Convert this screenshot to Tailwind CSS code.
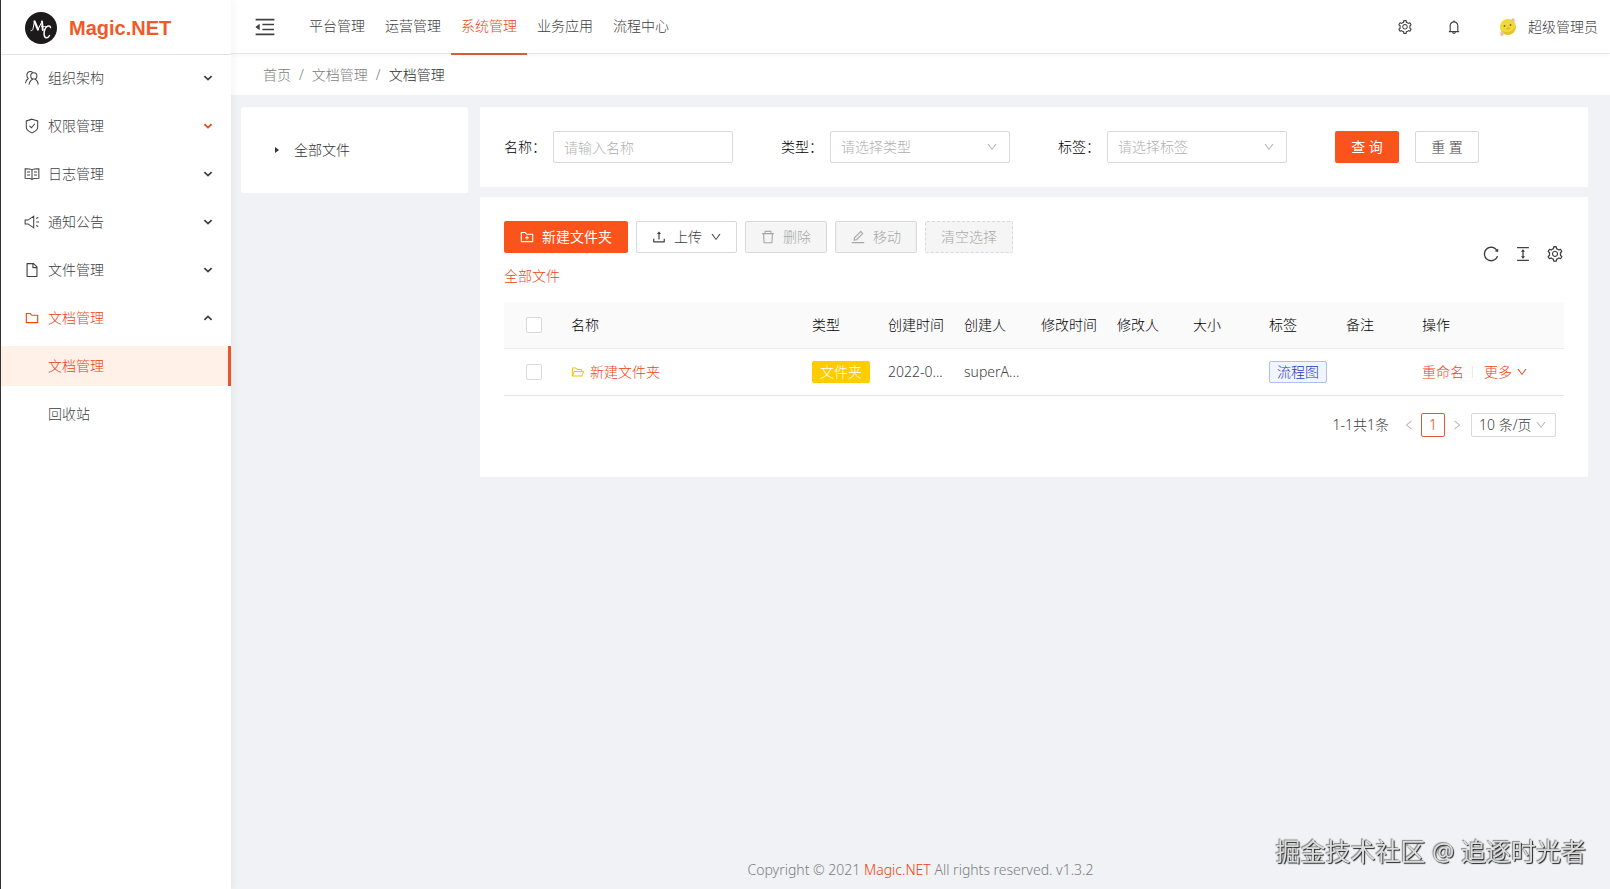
<!DOCTYPE html>
<html lang="zh-CN">

<head>
  <meta charset="UTF-8" />
  <meta name="viewport" content="width=device-width, initial-scale=1.0" />
  <title>文档管理 - Magic.NET</title>
  <script src="https://cdn.jsdelivr.net/npm/@tailwindcss/browser@4"></script>
</head>

<body class="flex min-h-screen bg-[#f0f2f5] font-['Noto_Sans','Noto_Sans_CJK_SC',sans-serif] text-sm font-light text-[#404040]">

  <!-- icons -->
  <svg class="hidden">
    <symbol id="down" viewBox="0 0 1024 1024"><path d="M884 256h-75c-5.1 0-9.9 2.5-12.9 6.6L512 654.2 227.9 262.6c-3-4.1-7.8-6.6-12.9-6.6h-75c-6.5 0-10.3 7.4-6.5 12.7l352.6 486.1c12.8 17.6 39 17.6 51.7 0l352.6-486.1c3.9-5.3.1-12.7-6.4-12.7z" /></symbol>
    <symbol id="left" viewBox="0 0 1024 1024"><path d="M724 218.3V141c0-6.7-7.7-10.4-12.9-6.3L260.3 486.8a31.86 31.86 0 000 50.3l450.8 352.1c5.3 4.1 12.9.4 12.9-6.3v-77.3c0-4.9-2.3-9.6-6.1-12.6l-360-281 360-281.1c3.8-3 6.1-7.7 6.1-12.6z" /></symbol>
    <symbol id="right" viewBox="0 0 1024 1024"><path d="M765.7 486.8L314.9 134.7A7.97 7.97 0 00302 141v77.3c0 4.9 2.3 9.6 6.1 12.6l360 281.1-360 281.1c-3.9 3-6.1 7.7-6.1 12.6V883c0 6.7 7.7 10.4 12.9 6.3l450.8-352.1a31.96 31.96 0 000-50.4z" /></symbol>
    <symbol id="folder" viewBox="0 0 1024 1024"><path d="M880 298.4H521L403.7 186.2a8.15 8.15 0 00-5.5-2.2H144c-17.7 0-32 14.3-32 32v592c0 17.7 14.3 32 32 32h736c17.7 0 32-14.3 32-32V330.4c0-17.7-14.3-32-32-32zM840 768H184V256h188.5l119.6 114.4H840V768z" /></symbol>
    <symbol id="folder-add" viewBox="0 0 1024 1024"><path d="M484 443.1V528h-84.5c-4.1 0-7.5 3.1-7.5 7v42c0 3.8 3.4 7 7.5 7H484v84.9c0 3.9 3.2 7.1 7 7.1h42c3.9 0 7-3.2 7-7.1V584h84.5c4.1 0 7.5-3.2 7.5-7v-42c0-3.9-3.4-7-7.5-7H540v-84.9c0-3.9-3.1-7.1-7-7.1h-42c-3.8 0-7 3.2-7 7.1zM880 298.4H521L403.7 186.2a8.15 8.15 0 00-5.5-2.2H144c-17.7 0-32 14.3-32 32v592c0 17.7 14.3 32 32 32h736c17.7 0 32-14.3 32-32V330.4c0-17.7-14.3-32-32-32zM840 768H184V256h188.5l119.6 114.4H840V768z" /></symbol>
    <symbol id="folder-open" viewBox="0 0 1024 1024"><path d="M928 444H820V330.4c0-17.7-14.3-32-32-32H473L355.7 186.2a8.15 8.15 0 00-5.5-2.2H96c-17.7 0-32 14.3-32 32v592c0 17.7 14.3 32 32 32h698c13 0 24.8-7.9 29.7-20l134-332c1.5-3.8 2.3-7.9 2.3-12 0-17.7-14.3-32-32-32zM136 256h188.5l119.6 114.4H748V444H238c-13 0-24.8 7.9-29.7 20L136 643.2V256zm635.3 512H159l103.3-256h612.4L771.3 768z" /></symbol>
    <symbol id="file" viewBox="0 0 1024 1024"><path d="M854.6 288.6L639.4 73.4c-6-6-14.1-9.4-22.6-9.4H192c-17.7 0-32 14.3-32 32v832c0 17.7 14.3 32 32 32h640c17.7 0 32-14.3 32-32V311.3c0-8.5-3.4-16.7-9.4-22.7zM790.2 326H602V137.8L790.2 326zm1.8 562H232V136h302v216a42 42 0 0042 42h216v494z" /></symbol>
    <symbol id="delete" viewBox="0 0 1024 1024"><path d="M360 184h-8c4.4 0 8-3.6 8-8v8h304v-8c0 4.4 3.6 8 8 8h-8v72h72v-80c0-35.3-28.7-64-64-64H352c-35.3 0-64 28.7-64 64v80h72v-72zm504 72H160c-17.7 0-32 14.3-32 32v32c0 4.4 3.6 8 8 8h60.4l24.7 523c1.6 34.1 29.8 61 63.9 61h454c34.2 0 62.3-26.8 63.9-61l24.7-523H888c4.4 0 8-3.6 8-8v-32c0-17.7-14.3-32-32-32zM731.3 840H292.7l-24.2-512h487l-24.2 512z" /></symbol>
    <symbol id="edit" viewBox="0 0 1024 1024"><path d="M257.7 752c2 0 4-.2 6-.5L431.9 722c2-.4 3.9-1.3 5.3-2.8l423.9-423.9a9.96 9.96 0 000-14.1L694.9 114.9c-1.9-1.9-4.4-2.9-7.1-2.9s-5.2 1-7.1 2.9L256.8 538.8c-1.5 1.5-2.4 3.3-2.8 5.3l-29.5 168.2a33.5 33.5 0 009.4 29.8c6.6 6.4 14.9 9.9 23.8 9.9zm67.4-174.4L687.8 215l73.3 73.3-362.7 362.6-88.9 15.7 15.6-89zM880 836H144c-17.7 0-32 14.3-32 32v36c0 4.4 3.6 8 8 8h784c4.4 0 8-3.6 8-8v-36c0-17.7-14.3-32-32-32z" /></symbol>
    <symbol id="upload" viewBox="0 0 1024 1024"><path d="M400 317.7h73.9V656c0 4.4 3.6 8 8 8h60c4.4 0 8-3.6 8-8V317.7H624c6.7 0 10.4-7.7 6.3-12.9L518.3 163a8 8 0 00-12.6 0l-112 141.7c-4.1 5.3-.4 13 6.3 13zM878 626h-60c-4.4 0-8 3.6-8 8v154H214V634c0-4.4-3.6-8-8-8h-60c-4.4 0-8 3.6-8 8v198c0 17.7 14.3 32 32 32h684c17.7 0 32-14.3 32-32V634c0-4.4-3.6-8-8-8z" /></symbol>
    <symbol id="reload" viewBox="0 0 1024 1024"><path d="M909.1 209.3l-56.4 44.1C775.8 155.1 656.2 92 521.9 92 290 92 102.3 279.5 102 511.5 101.7 743.7 289.8 932 521.9 932c181.3 0 335.8-115 394.6-276.1 1.5-4.2-.7-8.9-4.9-10.3l-56.7-19.5a8 8 0 00-10.1 4.8c-1.8 5-3.8 10-5.9 14.9-17.3 41-42.1 77.8-73.7 109.4A344.77 344.77 0 01655.9 829c-42.3 17.9-87.4 27-133.8 27-46.5 0-91.5-9.1-133.8-27A341.5 341.5 0 01279 755.2a342.16 342.16 0 01-73.7-109.4c-17.9-42.4-27-87.4-27-133.9s9.1-91.5 27-133.9c17.3-41 42.1-77.8 73.7-109.4 31.6-31.6 68.4-56.4 109.3-73.8 42.3-17.9 87.4-27 133.8-27 46.5 0 91.5 9.1 133.8 27a341.5 341.5 0 01109.3 73.8c9.9 9.9 19.2 20.4 27.8 31.4l-60.2 47a8 8 0 003 14.1l175.6 43c5 1.2 9.9-2.6 9.9-7.7l.8-180.9c-.1-6.6-7.8-10.3-13-6.2z" /></symbol>
    <symbol id="column-height" viewBox="0 0 1024 1024"><path d="M840 836H184c-4.4 0-8 3.6-8 8v60c0 4.4 3.6 8 8 8h656c4.4 0 8-3.6 8-8v-60c0-4.4-3.6-8-8-8zm0-724H184c-4.4 0-8 3.6-8 8v60c0 4.4 3.6 8 8 8h656c4.4 0 8-3.6 8-8v-60c0-4.4-3.6-8-8-8zM610.8 378c6 0 9.4-7 5.7-11.7L515.7 238.7a7.14 7.14 0 00-11.3 0L403.6 366.3a7.23 7.23 0 005.7 11.7H476v268h-62.8c-6 0-9.4 7-5.7 11.7l100.8 127.5c2.9 3.7 8.5 3.7 11.3 0l100.8-127.5c3.7-4.7.4-11.7-5.7-11.7H548V378h62.8z" /></symbol>
    <symbol id="setting" viewBox="0 0 1024 1024"><path d="M924.8 625.7l-65.5-56c3.1-19 4.7-38.4 4.7-57.8s-1.6-38.8-4.7-57.8l65.5-56a32.03 32.03 0 009.3-35.2l-.9-2.6a443.74 443.74 0 00-79.7-137.9l-1.8-2.1a32.12 32.12 0 00-35.1-9.5l-81.3 28.9c-30-24.6-63.5-44-99.7-57.6l-15.7-85a32.05 32.05 0 00-25.8-25.7l-2.7-.5c-52.1-9.4-106.9-9.4-159 0l-2.7.5a32.05 32.05 0 00-25.8 25.7l-15.8 85.4a351.86 351.86 0 00-99 57.4l-81.9-29.1a32 32 0 00-35.1 9.5l-1.8 2.1a446.02 446.02 0 00-79.7 137.9l-.9 2.6c-4.5 12.5-.8 26.5 9.3 35.2l66.3 56.6c-3.1 18.8-4.6 38-4.6 57.1 0 19.2 1.5 38.4 4.6 57.1L99 625.5a32.03 32.03 0 00-9.3 35.2l.9 2.6c18.1 50.4 44.9 96.9 79.7 137.9l1.8 2.1a32.12 32.12 0 0035.1 9.5l81.9-29.1c29.8 24.5 63.1 43.9 99 57.4l15.8 85.4a32.05 32.05 0 0025.8 25.7l2.7.5a449.4 449.4 0 00159 0l2.7-.5a32.05 32.05 0 0025.8-25.7l15.7-85a350 350 0 0099.7-57.6l81.3 28.9a32 32 0 0035.1-9.5l1.8-2.1c34.8-41.1 61.6-87.5 79.7-137.9l.9-2.6c4.5-12.3.8-26.3-9.3-35zM788.3 465.9c2.5 15.1 3.8 30.6 3.8 46.1s-1.3 31-3.8 46.1l-6.6 40.1 74.7 63.9a370.03 370.03 0 01-42.6 73.6L721 702.8l-31.4 25.8c-23.9 19.6-50.5 35-79.3 45.8l-38.1 14.3-17.9 97a377.5 377.5 0 01-85 0l-17.9-97.2-37.8-14.5c-28.5-10.8-55-26.2-78.7-45.7l-31.4-25.9-93.4 33.2c-17-22.9-31.2-47.6-42.6-73.6l75.5-64.5-6.5-40c-2.4-14.9-3.7-30.3-3.7-45.5 0-15.3 1.2-30.6 3.7-45.5l6.5-40-75.5-64.5c11.3-26.1 25.6-50.7 42.6-73.6l93.4 33.2 31.4-25.9c23.7-19.5 50.2-34.9 78.7-45.7l37.9-14.3 17.9-97.2c28.1-3.2 56.8-3.2 85 0l17.9 97 38.1 14.3c28.7 10.8 55.4 26.2 79.3 45.8l31.4 25.8 92.8-32.9c17 22.9 31.2 47.6 42.6 73.6L781.8 426l6.5 39.9zM512 326c-97.2 0-176 78.8-176 176s78.8 176 176 176 176-78.8 176-176-78.8-176-176-176zm79.2 255.2A111.6 111.6 0 01512 614c-29.9 0-58-11.7-79.2-32.8A111.6 111.6 0 01400 502c0-29.9 11.7-58 32.8-79.2C454 401.6 482.1 390 512 390c29.9 0 58 11.6 79.2 32.8A111.6 111.6 0 01624 502c0 29.9-11.7 58-32.8 79.2z" /></symbol>
    <symbol id="bell" viewBox="0 0 1024 1024"><path d="M816 768h-24V428c0-141.1-104.3-257.7-240-277.1V112c0-22.1-17.9-40-40-40s-40 17.9-40 40v38.9c-135.7 19.4-240 136-240 277.1v340h-24c-17.7 0-32 14.3-32 32v32c0 4.4 3.6 8 8 8h216c0 61.8 50.2 112 112 112s112-50.2 112-112h216c4.4 0 8-3.6 8-8v-32c0-17.7-14.3-32-32-32zM512 888c-26.5 0-48-21.5-48-48h96c0 26.5-21.5 48-48 48zM304 768V428c0-55.6 21.6-107.8 60.9-147.1S456.4 220 512 220c55.6 0 107.8 21.6 147.1 60.9S720 372.4 720 428v340H304z" /></symbol>
    <symbol id="menu-fold" viewBox="0 0 1024 1024"><path d="M408 442h480c4.4 0 8-3.6 8-8v-56c0-4.4-3.6-8-8-8H408c-4.4 0-8 3.6-8 8v56c0 4.4 3.6 8 8 8zm-8 204c0 4.4 3.6 8 8 8h480c4.4 0 8-3.6 8-8v-56c0-4.4-3.6-8-8-8H408c-4.4 0-8 3.6-8 8v56zm504-486H120c-4.4 0-8 3.6-8 8v56c0 4.4 3.6 8 8 8h784c4.4 0 8-3.6 8-8v-56c0-4.4-3.6-8-8-8zm0 632H120c-4.4 0-8 3.6-8 8v56c0 4.4 3.6 8 8 8h784c4.4 0 8-3.6 8-8v-56c0-4.4-3.6-8-8-8zM115.4 518.9L271.7 642c5.8 4.6 14.4.5 14.4-6.9V388.9c0-7.4-8.5-11.5-14.4-6.9L115.4 505.1a8.74 8.74 0 000 13.8z" /></symbol>
    <symbol id="arrow" viewBox="0 0 10 10"><path d="M1.4 3.2 5 6.6 8.6 3.2" fill="none" stroke="currentColor" stroke-width="1.8" /></symbol>
    <symbol id="team" viewBox="0 0 14 14"><g fill="none" stroke="currentColor" stroke-width=".9"><path d="M3.7 7.200A3.200 3.200 0 0 1 2.500 4.600C2.500 2.700 3.800 1.400 5.400 1.400c.9 0 1.600.3 2.200.8M4 7.200C2.400 8.200 1.500 9.600 1.200 11.600" /><circle cx="8.600" cy="5.200" r="2.700" /><path d="M7.900 7.900c-2 .8-3.100 2.500-3.500 4.900M9.400 7.900c1.800.8 2.800 2.500 3.100 4.900" /></g></symbol>
    <symbol id="shield" viewBox="0 0 14 14"><path d="M7 1 12 2.600V8c0 2.200-2.200 3.800-5 5C4.200 11.800 2 10.200 2 8V2.600zM4.800 6.800l1.700 1.700 3-3.500" fill="none" stroke="currentColor" stroke-width=".9" /></symbol>
    <symbol id="read" viewBox="0 0 14 14"><path d="M7 3.400C5.800 2.600 4.500 2.400 1 2.400v8.400c3.400 0 4.800.2 6 1 1.200-.8 2.600-1 6-1V2.400c-3.500 0-4.800.2-6 1zM7 3.400v8.400M2.700 5.200h2.600M2.700 7.800h2.600M8.700 5.200h2.600M8.700 7.800h2.600" fill="none" stroke="currentColor" stroke-width=".9" /></symbol>
    <symbol id="notice" viewBox="0 0 14 14"><path d="M1 5.300v3.400h2.500l5 3.400V1.900l-5 3.400zM10.800 7h2.400M10.600 3.900l1.900-.9M10.600 10.100l1.900.9" fill="none" stroke="currentColor" stroke-width=".9" /></symbol>
  </svg>

  <!-- sidebar -->
  <aside class="z-10 w-[231px] shrink-0 border-l border-[#333] bg-white shadow-[2px_0_8px_rgba(29,35,41,0.05)]">
    <a href="#" class="flex h-[55px] items-center gap-3 border-b border-[#e4e4ea] pt-0.5 pl-6">
      <svg class="size-8" viewBox="0 0 32 32">
        <circle cx="16" cy="16" r="16" fill="#1c1a1b" />
        <g fill="none" stroke="#fff" stroke-linecap="round">
          <path d="M6 18.500c1 .6 1.700-.4 2.100-2L9.500 9.500" />
          <path d="M9.500 9.500l3.500 8" stroke-width="2.200" />
          <path d="M13 17.500l4-8" />
          <path d="M17 9.500l.8 8.500" stroke-width="2" />
          <path d="M25.500 15.500c-.5-2.500-4-2-5.500 1.500s-1.200 8.500 1.200 8.800c1.500.2 2.500-.8 3.300-2.300" stroke-width="1.500" />
          <path d="M16.500 14.500h6" stroke-width=".8" />
        </g>
      </svg>
      <span class="font-['Liberation_Sans',sans-serif] text-xl font-bold text-[#f05a28]">Magic.NET</span>
    </a>
    <nav class="flex flex-col gap-2 pt-[3px]">
      <button type="button" class="flex h-10 items-center pr-[18px] pl-[23px]">
        <svg class="size-4 fill-current"><use href="#team" /></svg>
        <span class="ml-2">组织架构</span>
        <svg class="ml-auto size-2.5"><use href="#arrow" /></svg>
      </button>
      <button type="button" class="flex h-10 items-center pr-[18px] pl-[23px]">
        <svg class="size-4 fill-current"><use href="#shield" /></svg>
        <span class="ml-2">权限管理</span>
        <svg class="ml-auto size-2.5 text-[#e64a19]"><use href="#arrow" /></svg>
      </button>
      <button type="button" class="flex h-10 items-center pr-[18px] pl-[23px]">
        <svg class="size-4 fill-current"><use href="#read" /></svg>
        <span class="ml-2">日志管理</span>
        <svg class="ml-auto size-2.5"><use href="#arrow" /></svg>
      </button>
      <button type="button" class="flex h-10 items-center pr-[18px] pl-[23px]">
        <svg class="size-4 fill-current"><use href="#notice" /></svg>
        <span class="ml-2">通知公告</span>
        <svg class="ml-auto size-2.5"><use href="#arrow" /></svg>
      </button>
      <button type="button" class="flex h-10 items-center pr-[18px] pl-[23px]">
        <svg class="size-4 fill-current"><use href="#file" /></svg>
        <span class="ml-2">文件管理</span>
        <svg class="ml-auto size-2.5"><use href="#arrow" /></svg>
      </button>
      <button type="button" class="flex h-10 items-center pr-[18px] pl-[23px]">
        <svg class="size-4 fill-[#ee4410]"><use href="#folder" /></svg>
        <span class="ml-2 text-[#ee4410]">文档管理</span>
        <svg class="ml-auto size-2.5 rotate-180"><use href="#arrow" /></svg>
      </button>
      <a href="#" class="flex h-10 items-center border-r-3 border-[#e8562a] bg-[#fff0e8] pl-[47px] text-[#ee4410]">文档管理</a>
      <a href="#" class="flex h-10 items-center pl-[47px]">回收站</a>
    </nav>
  </aside>

  <div class="flex min-w-0 flex-1 flex-col">
    <!-- top bar -->
    <header class="relative flex h-[54px] items-center border-b border-[#e6e6e8] bg-white pr-3 pl-[22px] shadow-[0_1px_4px_rgba(0,21,41,0.04)]">
      <button type="button" aria-label="收起菜单"><svg class="size-6 fill-current"><use href="#menu-fold" /></svg></button>
      <nav class="ml-[22px] flex self-stretch">
        <a href="#" class="flex h-[55px] items-center border-b-2 border-transparent px-2.5 pb-0.5">平台管理</a>
        <a href="#" class="flex h-[55px] items-center border-b-2 border-transparent px-2.5 pb-0.5">运营管理</a>
        <a href="#" class="flex h-[55px] items-center border-b-2 border-[#d95b38] px-2.5 pb-0.5 text-[#ee4410]">系统管理</a>
        <a href="#" class="flex h-[55px] items-center border-b-2 border-transparent px-2.5 pb-0.5">业务应用</a>
        <a href="#" class="flex h-[55px] items-center border-b-2 border-transparent px-2.5 pb-0.5">流程中心</a>
      </nav>
      <div class="ml-auto flex items-center">
        <button type="button" aria-label="设置"><svg class="size-4 fill-current"><use href="#setting" /></svg></button>
        <button type="button" aria-label="通知" class="ml-[33px]"><svg class="size-4 fill-current"><use href="#bell" /></svg></button>
        <button type="button" class="ml-9 flex items-center gap-2.5">
          <svg class="size-5" viewBox="0 0 20 20">
            <circle cx="10" cy="10" r="8" fill="#f0d936" />
            <path d="M3 14c2 3.500 7 5 11 2.500 2.500-1.500 4-4.500 3.500-8-1 5-7 8.500-14.500 5.500z" fill="#e4c52c" />
            <circle cx="6.500" cy="9" r=".9" fill="#7c6420" />
            <circle cx="12.500" cy="8" r=".9" fill="#7c6420" />
            <path d="M8.500 12c1-.9 2.300-1 3.300-.5" fill="none" stroke="#a8862a" stroke-width=".7" />
            <ellipse cx="15" cy="3.500" rx="1.800" ry="2.200" fill="#e8c09a" />
            <ellipse cx="4" cy="16.800" rx="1.900" ry="2.200" fill="#ecc4a4" />
          </svg>
          超级管理员
        </button>
      </div>
    </header>
    <ol class="flex h-[41px] items-center gap-2 bg-white pl-8 text-[#7d7d7d]">
      <li><a href="#">首页</a></li>
      <li>/</li>
      <li><a href="#">文档管理</a></li>
      <li>/</li>
      <li class="text-[#303030]">文档管理</li>
    </ol>

    <main class="flex flex-1 items-start gap-3 pt-3 pr-[22px] pl-2.5">
      <!-- folder tree -->
      <section class="w-[227px] shrink-0 rounded-xs bg-white py-8 pl-[34px]">
        <button type="button" class="flex h-[22px] items-center gap-[15px] text-[#333]">
          <svg class="h-[6px] w-[4px] fill-current" viewBox="0 0 4 6"><path d="M0 0 4 3 0 6z" /></svg>
          全部文件
        </button>
      </section>

      <div class="flex min-w-0 flex-1 flex-col gap-2.5">
        <!-- search -->
        <form class="flex items-center gap-12 bg-white p-6 text-black">
          <div class="flex items-center">
            <label for="name" class="w-[49px]">名称：</label>
            <input id="name" type="text" placeholder="请输入名称" class="h-8 w-[180px] rounded-xs border border-[#d9d9d9] px-2.5 font-light placeholder-[#b0b0b0] focus:outline-none" />
          </div>
          <div class="flex items-center">
            <label for="type" class="w-[49px]">类型：</label>
            <div class="relative">
              <select id="type" class="h-8 w-[180px] appearance-none rounded-xs border border-[#d9d9d9] bg-white px-2.5 font-light text-[#b0b0b0]">
                <option>请选择类型</option>
              </select>
              <svg class="pointer-events-none absolute top-2.5 right-3 size-3 fill-[#b5b5b5]"><use href="#down" /></svg>
            </div>
          </div>
          <div class="flex items-center">
            <label for="tag" class="w-[49px]">标签：</label>
            <div class="relative">
              <select id="tag" class="h-8 w-[180px] appearance-none rounded-xs border border-[#d9d9d9] bg-white px-2.5 font-light text-[#b0b0b0]">
                <option>请选择标签</option>
              </select>
              <svg class="pointer-events-none absolute top-2.5 right-3 size-3 fill-[#b5b5b5]"><use href="#down" /></svg>
            </div>
          </div>
          <div class="flex gap-4">
            <button type="submit" class="h-8 w-16 rounded-xs bg-[#fa541c] font-normal text-white">查 询</button>
            <button type="reset" class="h-8 w-16 rounded-xs border border-[#d9d9d9] text-[#404040]">重 置</button>
          </div>
        </form>

        <!-- file list -->
        <section class="bg-white px-6 pt-6 pb-10">
          <div class="flex items-center">
            <div>
              <div class="flex gap-2">
                <button type="button" class="flex h-8 items-center gap-1.5 rounded-xs bg-[#fa541c] px-[15px] pr-4 font-normal text-white">
                  <svg class="size-4 fill-current"><use href="#folder-add" /></svg><span class="ml-px">新建文件夹</span>
                </button>
                <button type="button" class="flex h-8 items-center gap-[7px] rounded-xs border border-[#d9d9d9] px-3.5">
                  <svg class="size-4 fill-current"><use href="#upload" /></svg>上传<svg class="ml-px size-3 fill-current"><use href="#down" /></svg>
                </button>
                <button type="button" disabled class="flex h-8 items-center gap-[7px] rounded-xs border border-[#d9d9d9] bg-[#f5f5f5] pr-[15px] pl-3.5 text-[#a8a8a8]">
                  <svg class="size-4 fill-current"><use href="#delete" /></svg>删除
                </button>
                <button type="button" disabled class="flex h-8 items-center gap-[7px] rounded-xs border border-[#d9d9d9] bg-[#f5f5f5] pr-[15px] pl-3.5 text-[#a8a8a8]">
                  <svg class="size-4 fill-current"><use href="#edit" /></svg>移动
                </button>
                <button type="button" disabled class="flex h-8 items-center rounded-xs border border-dashed border-[#d9d9d9] bg-[#f5f5f5] px-[15px] text-[#a8a8a8]">清空选择</button>
              </div>
              <a href="#" class="mt-3 block leading-[22px] text-[#ee4410]">全部文件</a>
            </div>
            <div class="ml-auto flex gap-3.5 text-[#404040]">
              <button type="button" aria-label="刷新"><svg class="size-[18px] fill-current"><use href="#reload" /></svg></button>
              <button type="button" aria-label="密度"><svg class="size-[18px] fill-current"><use href="#column-height" /></svg></button>
              <button type="button" aria-label="列设置"><svg class="size-[18px] fill-current"><use href="#setting" /></svg></button>
            </div>
          </div>

          <table class="mt-[15px] w-full table-fixed text-left">
            <colgroup>
              <col class="w-[59px]" />
              <col />
              <col class="w-[76px]" />
              <col class="w-[76px]" />
              <col class="w-[77px]" />
              <col class="w-[76px]" />
              <col class="w-[76px]" />
              <col class="w-[76px]" />
              <col class="w-[77px]" />
              <col class="w-[76px]" />
              <col class="w-[150px]" />
            </colgroup>
            <thead class="bg-[#fafafa] text-black">
              <tr class="h-[46px] border-b border-[#ebebeb]">
                <th class="p-0 text-center"><input type="checkbox" aria-label="全选" class="mx-auto block size-4 appearance-none rounded-xs border border-[#d9d9d9] bg-white" /></th>
                <th class="px-2 font-light">名称</th>
                <th class="px-2 font-light">类型</th>
                <th class="px-2 font-light">创建时间</th>
                <th class="px-2 font-light">创建人</th>
                <th class="px-2 font-light">修改时间</th>
                <th class="px-2 font-light">修改人</th>
                <th class="px-2 font-light">大小</th>
                <th class="px-2 font-light">标签</th>
                <th class="px-2 font-light">备注</th>
                <th class="px-2 font-light">操作</th>
              </tr>
            </thead>
            <tbody>
              <tr class="h-[47px] border-b border-[#e6e6e6]">
                <td class="text-center"><input type="checkbox" aria-label="选择 新建文件夹" class="mx-auto block size-4 appearance-none rounded-xs border border-[#d9d9d9] bg-white" /></td>
                <td class="px-2">
                  <a href="#" class="flex items-center gap-[5px] text-[#ee4410]"><svg class="size-3.5 fill-[#f5c400]"><use href="#folder-open" /></svg>新建文件夹</a>
                </td>
                <td class="pl-2"><span class="block h-[22px] w-[58px] rounded-xs bg-[#fc0] text-center leading-[22px] text-white">文件夹</span></td>
                <td class="pl-2 whitespace-nowrap">2022-0...</td>
                <td class="pl-2 whitespace-nowrap">superA...</td>
                <td></td>
                <td></td>
                <td></td>
                <td class="pl-2"><span class="block h-[22px] w-[58px] rounded-xs border border-[#adc0f0] bg-[#f0f5ff] text-center leading-5 text-[#1d39c4]">流程图</span></td>
                <td></td>
                <td class="px-2">
                  <div class="flex items-center text-[#ee4410]">
                    <a href="#">重命名</a>
                    <span class="mx-2 h-3 w-px bg-[#e8e8e8]"></span>
                    <button type="button" class="ml-[3px] flex items-center gap-1">更多<svg class="size-3 fill-current"><use href="#down" /></svg></button>
                  </div>
                </td>
              </tr>
            </tbody>
          </table>

          <div class="mt-[17px] mr-2 flex h-6 items-center justify-end">
            <span>1-1共1条</span>
            <button type="button" disabled aria-label="上一页" class="ml-2 flex size-6 items-center justify-center"><svg class="size-3 fill-[#b5b5b5]"><use href="#left" /></svg></button>
            <button type="button" class="size-6 rounded-xs border border-[#d95b38] leading-5 text-[#ee4410]">1</button>
            <button type="button" disabled aria-label="下一页" class="flex size-6 items-center justify-center"><svg class="size-3 fill-[#b5b5b5]"><use href="#right" /></svg></button>
            <div class="relative ml-0.5">
              <select aria-label="每页条数" class="block h-6 w-[85px] appearance-none rounded-xs border border-[#d9d9d9] bg-white pl-[7px] leading-5 font-light">
                <option>10 条/页</option>
              </select>
              <svg class="pointer-events-none absolute top-1.5 right-[9px] size-3 fill-[#b5b5b5]"><use href="#down" /></svg>
            </div>
          </div>
        </section>
      </div>
    </main>

    <footer class="pb-2 text-center leading-[22px] text-[#7d7d7d]">
      Copyright © 2021 <a href="#" class="text-[#ee4410]">Magic.NET</a> All rights reserved. v1.3.2
    </footer>
  </div>

  <!-- watermark -->
  <div class="pointer-events-none fixed right-6 bottom-5 text-[25px] leading-9 font-normal text-[#dcdcdc] [text-shadow:1px_1px_1px_#222,-1px_-1px_1px_#888]">掘金技术社区 @ 追逐时光者</div>
</body>

</html>
